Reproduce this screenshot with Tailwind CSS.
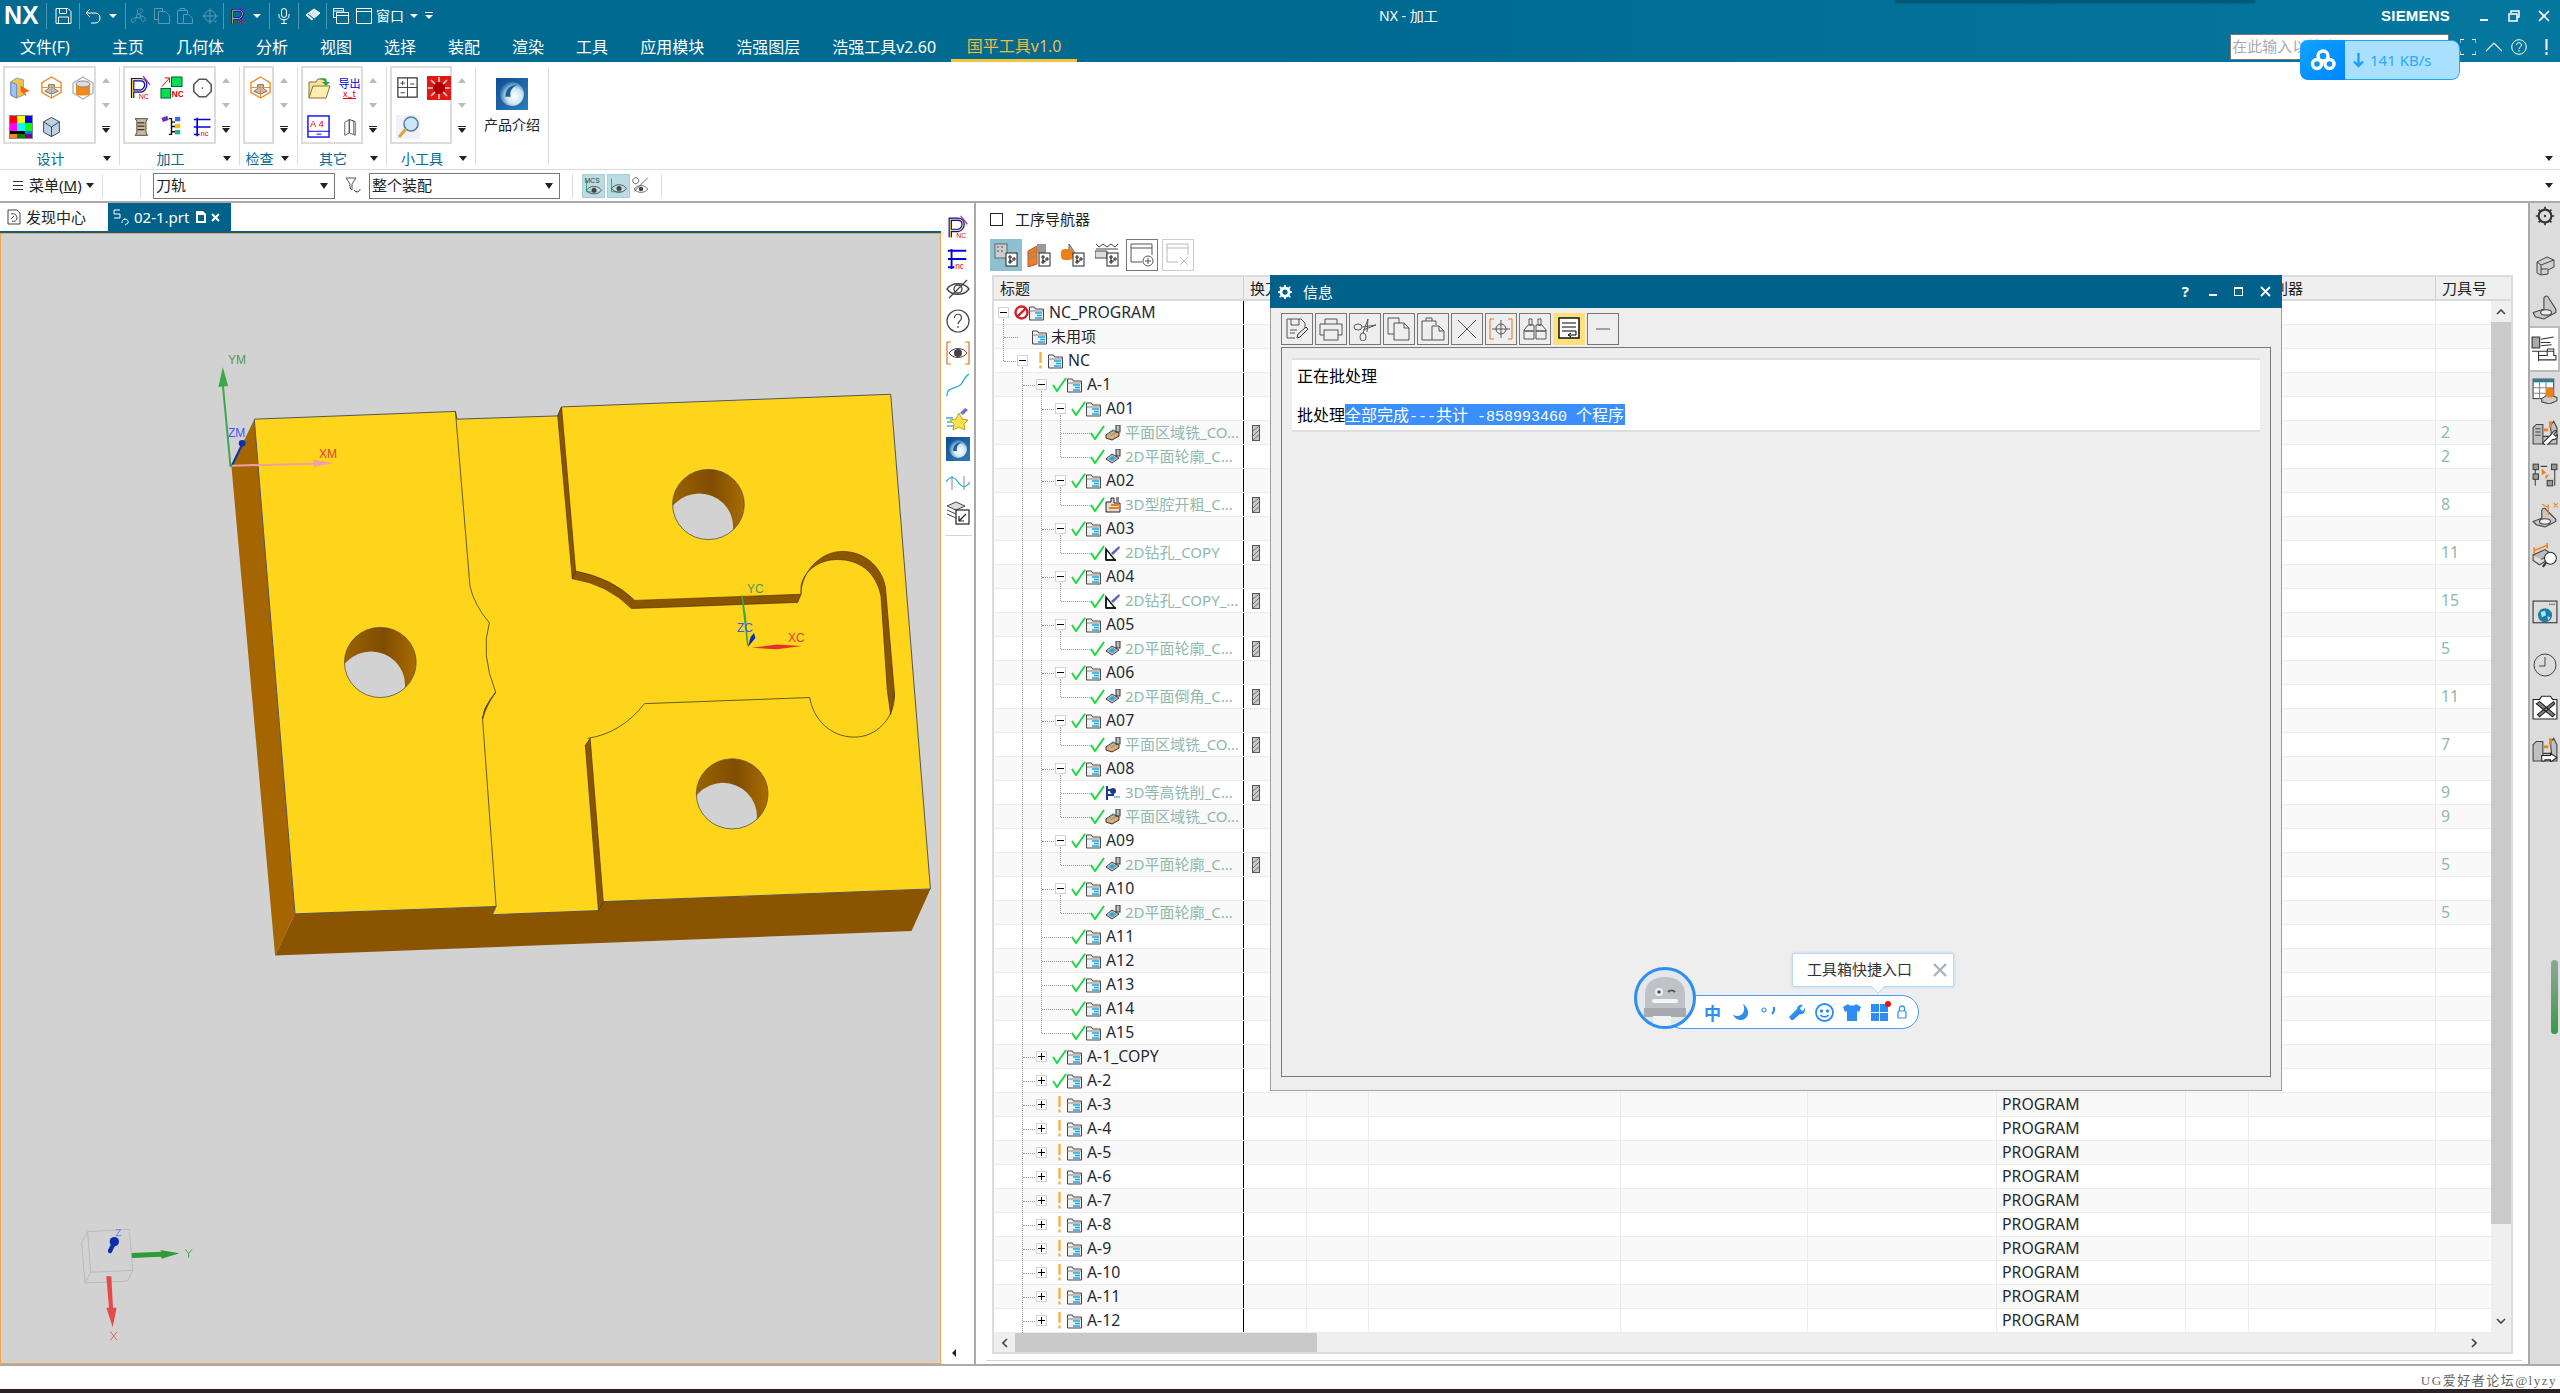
<!DOCTYPE html>
<html lang="zh">
<head>
<meta charset="utf-8">
<title>NX - 加工</title>
<script src="https://cdn.jsdelivr.net/npm/@tailwindcss/browser@4"></script>
</head>
<body class="m-0 bg-white">
<svg class="absolute w-0 h-0" aria-hidden="true">
<defs>
<linearGradient id="gBubble" x1="0" y1="0" x2="1" y2="1"><stop offset="0" stop-color="#0f4c92"/><stop offset="1" stop-color="#2b7fb8"/></linearGradient>
<radialGradient id="gSphere" cx=".6" cy=".6" r=".6"><stop offset="0" stop-color="#ffffff"/><stop offset=".55" stop-color="#cfe4f2"/><stop offset="1" stop-color="#2f74ad"/></radialGradient>
<linearGradient id="gHole" x1="0" y1="0" x2="1" y2="0"><stop offset="0" stop-color="#9c6200"/><stop offset=".55" stop-color="#7f4d00"/><stop offset="1" stop-color="#ab6c00"/></linearGradient>
<clipPath id="holeClip"><ellipse cx="1049" cy="425" rx="74" ry="86"/></clipPath>
<symbol id="pnc" viewBox="0 0 24 28"><path d="M3 26V5h9c5 0 6 4 6 6s-2 7-6 7H3" fill="none" stroke="#0000f0" stroke-width="4"/><path d="M3 26V5h9c5 0 6 4 6 6s-2 7-6 7H3" fill="none" stroke="#ffe600" stroke-width="1.3"/><path d="M15 1l8 10" stroke="#a020c0" stroke-width="1.4"/><text x="10" y="27" font-size="8" fill="#e00000" font-family="Liberation Sans">NC</text></symbol>
<symbol id="tnc" viewBox="0 0 24 24"><path d="M5 1v22M1 3h3M1 12h3M1 21h3M5 3h16M5 12h16M5 21h3" stroke="#0000e0" stroke-width="2" fill="none"/><text x="9" y="23" font-size="9" fill="#e00000" font-family="Liberation Sans">nc</text></symbol>
<symbol id="hexo" viewBox="0 0 24 24"><path d="M12 1l10 6v10l-10 6-10-6V7z" fill="none" stroke="#f08a24" stroke-width="1.4"/><path d="M9 9h6v4l4 3-7 3-7-3 4-3z" fill="#bdbdbd" stroke="#555" stroke-width=".8"/><path d="M2 12h20M12 13v10" stroke="#f08a24"/></symbol>
<symbol id="hexc" viewBox="0 0 24 24"><path d="M12 1l10 6v10l-10 6-10-6V7z" fill="none" stroke="#aaa" stroke-width="1.2"/><path d="M5 8h14v10c0 2-14 2-14 0z" fill="#ee8a1a"/><ellipse cx="12" cy="8" rx="7" ry="3" fill="#ddd" stroke="#888"/></symbol>
<symbol id="boxa" viewBox="0 0 24 24"><path d="M2 6l6-4 7 2v16l-7 3-6-3z" fill="#f4c24c" stroke="#7aa0d0"/><path d="M2 6l6 3v14l-6-3z" fill="#9fc4ee" stroke="#5b8bc8"/><path d="M12 10l10 6-5 1 1 4-6-5z" fill="#ee6a10"/></symbol>
<symbol id="colors" viewBox="0 0 24 24"><rect width="24" height="24" fill="#888"/><rect x="1" y="1" width="7" height="7" fill="#ff0000"/><rect x="8" y="1" width="8" height="7" fill="#ffff00"/><rect x="16" y="1" width="7" height="7" fill="#0000ff"/><rect x="1" y="8" width="7" height="8" fill="#ff00ff"/><rect x="8" y="8" width="8" height="8" fill="#00ffff"/><rect x="16" y="8" width="7" height="8" fill="#00ff00"/><rect x="1" y="16" width="7" height="3" fill="#000"/><rect x="8" y="16" width="8" height="3" fill="#000"/><rect x="16" y="16" width="7" height="3" fill="#0080ff"/><rect x="1" y="19" width="7" height="4" fill="#ff7f27"/><rect x="8" y="19" width="8" height="4" fill="#008000"/><rect x="16" y="19" width="7" height="4" fill="#800080"/></symbol>
<symbol id="cubeb" viewBox="0 0 24 24"><path d="M12 1l9 5v12l-9 5-9-5V6z" fill="#b8d3e6" stroke="#333"/><path d="M12 12l9-6M12 12L3 6M12 12v11" stroke="#333" fill="none"/></symbol>
<symbol id="nc2" viewBox="0 0 24 24"><rect x="1" y="13" width="10" height="10" fill="#00e050" stroke="#006030"/><rect x="12" y="1" width="11" height="10" fill="#00e050" stroke="#006030"/><path d="M2 11L10 2M5 2h5v5" stroke="#e00000" fill="none"/><text x="12" y="22" font-size="9" font-weight="700" fill="#e00000" font-family="Liberation Sans">NC</text></symbol>
<symbol id="ring" viewBox="0 0 24 24"><path d="M8 2h8l6 6v8l-6 6H8l-6-6V8z" fill="none" stroke="#555" stroke-width="1.8" stroke-linejoin="round"/><circle cx="12" cy="12" r="1" fill="#555"/></symbol>
<symbol id="scroll" viewBox="0 0 24 24"><path d="M5 2h15l-2 3v14l2 3H5l2-3V5z" fill="#cbb896" stroke="#333"/><path d="M8 7h8M8 11h8M8 15h8" stroke="#333" stroke-width="1.5"/></symbol>
<symbol id="tree2" viewBox="0 0 24 24"><path d="M9 3h3v18H9M12 7h4M12 12h4M12 18h4" stroke="#111" stroke-width="1.6" fill="none"/><rect x="1" y="1" width="7" height="5" fill="#7030c0" transform="rotate(-20 4 3)"/><rect x="16" y="1" width="6" height="5" fill="#3070e0"/><rect x="16" y="9" width="6" height="5" fill="#f0c020"/><rect x="16" y="16" width="6" height="5" fill="#20b0a0"/></symbol>
<symbol id="fold" viewBox="0 0 24 24"><path d="M2 22V6h7l2-3h8v6" fill="#fbe39a" stroke="#8a7030"/><path d="M2 22l4-12h17l-4 12z" fill="#fff0b0" stroke="#8a7030"/><path d="M12 3c5-2 7 0 8 3h3l-4 4-4-4h3c-1-2-3-3-6-3z" fill="#22aa44"/></symbol>
<symbol id="a4" viewBox="0 0 24 24"><rect x="1" y="1" width="22" height="22" fill="#fff" stroke="#0000f0" stroke-width="1.4"/><text x="3" y="12" font-size="10" fill="#e00000" font-family="Liberation Sans">A 4</text><path d="M1 17h22M10 20h5" stroke="#0000f0"/></symbol>
<symbol id="books" viewBox="0 0 24 24"><path d="M5 6l6-4v18l-6 3zM11 2l6 2v18l-6-2z" fill="#fff" stroke="#333"/><path d="M14 3l5 2v18l-2-1" fill="none" stroke="#333"/></symbol>
<symbol id="calc" viewBox="0 0 24 24"><rect x="1" y="1" width="22" height="22" fill="#fff" stroke="#333" stroke-width="1.4"/><path d="M12 1v22M1 12h22M4 7h5M6.500 4.500v5M4 18h5M15 8h5M15 12h5" stroke="#333"/></symbol>
<symbol id="redg" viewBox="0 0 24 24"><rect width="24" height="24" fill="#e01818"/><circle cx="12" cy="12" r="6" fill="#a00"/><g stroke="#ffd0d0" stroke-width="1.600"><path d="M12 1v5M12 18v5M1 12h5M18 12h5M4 4l4 4M16 16l4 4M20 4l-4 4M8 16l-4 4"/></g></symbol>
<symbol id="mag" viewBox="0 0 24 24"><rect width="24" height="24" fill="#f1f1f7"/><circle cx="15" cy="9" r="7" fill="#cde6f7" stroke="#4d7fa8" stroke-width="1.500"/><path d="M10 14L3 22" stroke="#e0a040" stroke-width="3"/></symbol>
<symbol id="bubble" viewBox="0 0 24 24"><rect width="24" height="24" fill="url(#gBubble)"/><circle cx="12" cy="12" r="9" fill="url(#gSphere)"/><path d="M7 14c0-6 4-9 9-9-4 2-6 5-5 9z" fill="#1d5d9a"/></symbol>
<symbol id="eyeoff" viewBox="0 0 24 24" fill="none" stroke="#444" stroke-width="1.3"><path d="M1 12c5-7 17-7 22 0-5 7-17 7-22 0z"/><circle cx="12" cy="12" r="4"/><path d="M3 21L21 3"/></symbol>
<symbol id="help" viewBox="0 0 24 24" fill="none" stroke="#444" stroke-width="1.200"><circle cx="12" cy="12" r="11"/><path d="M8.500 9c0-5 7-5 7 0 0 3-3.500 3-3.500 6M12 17v2"/></symbol>
<symbol id="eyeb" viewBox="0 0 24 24" fill="none"><path d="M5 1H1v22h4M19 1h4v22h-4" stroke="#e0761b" stroke-width="1.200"/><path d="M3 12c4-6 14-6 18 0-4 6-14 6-18 0z" stroke="#444"/><circle cx="12" cy="12" r="4" fill="#444"/></symbol>
<symbol id="curve" viewBox="0 0 24 24"><path d="M1 23C1 12 12 17 16 10 18 6 20 3 23 1" fill="none" stroke="#19a8d8" stroke-width="1.300"/></symbol>
<symbol id="star" viewBox="0 0 24 24"><path d="M13 6l3 6 6 1-4 4 1 6-6-3-6 3 1-6-4-4 6-1z" fill="#ffe14d" stroke="#c8a020"/><path d="M14 6l5-5 3 2-5 5z" fill="#7b70c0"/><path d="M0 11h7M1 15h5M1 19h7" stroke="#4aa8e0" stroke-width="1.500"/></symbol>
<symbol id="wave" viewBox="0 0 24 24"><path d="M0 12c4-6 8-6 12 0s8 6 12 0" fill="none" stroke="#19a8d8" stroke-width="1.200"/><path d="M6 6v14M18 6v14" stroke="#888"/></symbol>
<symbol id="layers" viewBox="0 0 24 24"><path d="M1 5l9-4 9 4-9 4z" fill="#ddd" stroke="#444"/><path d="M1 9l9 4 5-2M1 13l9 4" fill="none" stroke="#444"/><rect x="10" y="9" width="13" height="14" fill="#fff" stroke="#222" stroke-width="1.200"/><path d="M13 20l7-7M13 15v5h5" fill="none" stroke="#222" stroke-width="1.200"/></symbol>
<symbol id="folder" viewBox="0 0 15 16"><path d="M.5 15V2h5l1 2h8v11z" fill="#f0f0f0" stroke="#444"/><path d="M.5 6h14" stroke="#888"/><path d="M6 8h7M8 10.500h5M6 13h7" stroke="#18a8dc" stroke-width="1.600"/></symbol>
<symbol id="ok" viewBox="0 0 15 15"><path d="M1 8l4 6L14 1" fill="none" stroke="#22d84a" stroke-width="2"/></symbol>
<symbol id="warn" viewBox="0 0 15 17"><path d="M7.500 0v11M7.500 13.500v3" stroke="#fbb040" stroke-width="2.400"/></symbol>
<symbol id="stop" viewBox="0 0 15 15"><circle cx="7.500" cy="7.500" r="6" fill="none" stroke="#d21f27" stroke-width="2.400"/><path d="M3 12L12 3" stroke="#d21f27" stroke-width="2.400"/></symbol>
<symbol id="holder" viewBox="0 0 8 16"><rect x=".5" y=".5" width="7" height="15" fill="#c9c9c9" stroke="#555"/><path d="M1 6l6-5M1 11l6-6M1 15l6-5" stroke="#777"/></symbol>
<symbol id="opmill" viewBox="0 0 16 16"><path d="M1 10l7-5 6 3v3l-7 4-6-2z" fill="#f0a868" stroke="#333"/><path d="M3 9l7-4M5 11l7-4" stroke="#36a8d8"/><rect x="11" y="0" width="4" height="7" fill="#bbb" stroke="#333"/></symbol>
<symbol id="opprof" viewBox="0 0 16 16"><path d="M1 10l6-5 7 4-7 5z" fill="#bbb" stroke="#444"/><path d="M4 10l3-3 4 2-4 3z" fill="#2aa8dc"/><rect x="11" y="0" width="4" height="7" fill="#bbb" stroke="#333"/></symbol>
<symbol id="opcav" viewBox="0 0 16 16"><path d="M1 5h5V1h3v5h6v9H1z" fill="#ddd" stroke="#222"/><path d="M6 7h9v2H6zM4 10h11v2H4z" fill="#ef8019"/><rect x="11" y="0" width="3" height="6" fill="#888"/></symbol>
<symbol id="opdrill" viewBox="0 0 16 16"><path d="M1 15V4l9 11z" fill="#fff" stroke="#111" stroke-width="1.400"/><path d="M1 15V4M1 15h10" stroke="#111" stroke-width="1.400"/><path d="M6 8l8-7 1 2-7 7z" fill="#5a60c8"/></symbol>
<symbol id="opcont" viewBox="0 0 16 16"><path d="M2 1v14M2 5h5M2 10h7" stroke="#1b3a8a" stroke-width="2"/><circle cx="8" cy="6" r="3" fill="#1b3a8a"/><path d="M9 12h6" stroke="#38a"/></symbol>
<symbol id="navdoc" viewBox="0 0 24 24"><rect x="12" y="10" width="11" height="13" fill="#fff" stroke="#222"/><path d="M15 13h2v2h-2zM15 18h2v2h-2zM19 15h2v2h-2zM16 15v3h3" fill="none" stroke="#222"/></symbol>
<symbol id="d-save" viewBox="0 0 24 24" fill="none" stroke="#555" stroke-width="1"><path d="M2 2h14l4 4v6M2 2v19h8"/><path d="M6 2v6h8V2M5 13h7M5 16h5"/><path d="M12 21l1-4 8-7 2 2-8 8z" fill="#eee" stroke="#333"/></symbol>
<symbol id="d-print" viewBox="0 0 24 24" fill="none" stroke="#555" stroke-width="1"><path d="M6 7V2h12v5M5 18H1V7h22v11h-4"/><rect x="5" y="13" width="14" height="10"/></symbol>
<symbol id="d-cut" viewBox="0 0 24 24" fill="none" stroke="#555" stroke-width="1"><ellipse cx="5" cy="10" rx="4" ry="3"/><ellipse cx="10" cy="20" rx="3" ry="4"/><path d="M9 10l14-2-13 5M10 16l5-14-1 13"/></symbol>
<symbol id="d-copy" viewBox="0 0 24 24" fill="none" stroke="#555" stroke-width="1"><path d="M1 1h11v5M1 1v16h6"/><path d="M7 6h10l5 5v12H7z" fill="#eee"/><path d="M17 6v5h5"/></symbol>
<symbol id="d-paste" viewBox="0 0 24 24" fill="none" stroke="#555" stroke-width="1"><path d="M1 4h14v4M1 4v19h10M5 4V1h6v3"/><path d="M11 9h7l5 5v9H11z" fill="#eee"/><path d="M18 9v5h5"/></symbol>
<symbol id="d-x" viewBox="0 0 24 24"><path d="M3 3l18 18M21 3L3 21" stroke="#555"/></symbol>
<symbol id="d-tgt" viewBox="0 0 24 24" fill="none"><path d="M5 2H1v20h4M19 2h4v20h-4" stroke="#e0761b"/><circle cx="12" cy="12" r="5" stroke="#555"/><path d="M12 3v18M3 12h18" stroke="#555"/></symbol>
<symbol id="d-bino" viewBox="0 0 24 24" fill="none" stroke="#555" stroke-width="1"><path d="M6 2h3v6H6zM15 2h3v6h-3zM5 8h6v6H1v-1zM13 8h6l4 5v1H13zM1 14h10v8H1zM13 14h10v8H13z"/></symbol>
<symbol id="d-wrap" viewBox="0 0 24 24" fill="none"><rect x="2" y="1" width="20" height="20" fill="#fff" stroke="#000" stroke-width="1.400"/><path d="M5 6h14M5 10h14M5 14h14v4h-7M14 16l-3 2 3 2" stroke="#000"/></symbol>
<symbol id="d-min" viewBox="0 0 24 24"><path d="M5 12h14" stroke="#555"/></symbol>
<symbol id="w-plus" viewBox="0 0 24 24" fill="none" stroke="#555" stroke-width="1"><path d="M12 19H1V1h21v11M1 5h21"/><circle cx="18" cy="18" r="5"/><path d="M15 18h6M18 15v6"/></symbol>
<symbol id="w-x" viewBox="0 0 24 24" fill="none" stroke="#bbb" stroke-width="1"><path d="M12 19H1V1h21v11M1 5h21M14 14l8 8M22 14l-8 8"/></symbol>
<symbol id="r-gear" viewBox="0 0 24 24"><circle cx="12" cy="12" r="7" fill="none" stroke="#333" stroke-width="2.400"/><circle cx="12" cy="12" r="1.300" fill="#333"/><path d="M12 2v3M12 19v3M2 12h3M19 12h3M5 5l2 2M17 17l2 2M19 5l-2 2M7 17l-2 2" stroke="#333" stroke-width="1.800"/></symbol>
<symbol id="r-block" viewBox="0 0 24 24"><path d="M4 10l10-5 7 3v7l-6 3v4l-7 1-4-2z" fill="#d0d0d0" stroke="#444"/><path d="M4 10l4 3v10M8 13l13-5M8 17h7" stroke="#444" fill="none"/></symbol>
<symbol id="r-part" viewBox="0 0 24 24"><path d="M1 17l10-3V4c0-2 3-3 4-1l7 11v3l-11 6-8-2z" fill="#c8c8c8" stroke="#444"/><ellipse cx="13" cy="17" rx="5" ry="2.500" fill="#eee" stroke="#444"/></symbol>
<symbol id="r-step" viewBox="0 0 24 24" fill="none" stroke="#333"><rect x="1" y="1" width="7" height="10" fill="#aaa"/><path d="M9 3l12-2M9 6h9M9 9l10-1M1 14h20M7 14v9M7 18h8v-6M15 12h6v6h2v4H7"/></symbol>
<symbol id="r-table" viewBox="0 0 24 24"><rect x="1" y="1" width="19" height="18" fill="#fff" stroke="#444"/><rect x="1" y="1" width="19" height="3" fill="#2a7f9f"/><path d="M1 9h19M1 14h19M7 4v15M13 4v15" stroke="#888"/><path d="M9 19l6-4 8 3v3l-7 3-7-2z" fill="#ccc" stroke="#444"/><rect x="13" y="9" width="7" height="9" rx="2" fill="#ef8019"/></symbol>
<symbol id="r-mach" viewBox="0 0 24 24"><path d="M1 8l3-3h6v18H1zM10 16h8l-1-10 3-4 3 6v15H10z" fill="#c0c0c0" stroke="#444"/><path d="M3 9h5M3 12h5M3 15h5" stroke="#444"/><path d="M11 10h4M17 2v6" stroke="#ef8019" stroke-width="2.500"/><path d="M10 22l8-8c1-3 4-4 5-3l-3 3 2 2 2-2c0 3-2 5-5 5l-6 6z" fill="#fff" stroke="#333"/></symbol>
<symbol id="r-flow" viewBox="0 0 24 24" fill="none" stroke="#444"><rect x="1" y="2" width="5" height="5" fill="#999"/><rect x="1" y="11" width="5" height="5" fill="#999"/><rect x="18" y="2" width="5" height="5" fill="#999"/><rect x="14" y="17" width="5" height="5" fill="#999"/><path d="M3 7v4M3 16v6M21 7v15M8 4h6"/><path d="M9 6l4 4-4 2zM16 11l-3 5-1-3z" fill="#ef8019" stroke="none"/></symbol>
<symbol id="r-partx" viewBox="0 0 24 24"><path d="M1 18l8-3V8c0-2 3-3 4-1l9 9v2l-10 5-8-2z" fill="#c8c8c8" stroke="#444"/><ellipse cx="12" cy="18" rx="5" ry="2.500" fill="#eee" stroke="#444"/><path d="M9 2l6 3M15 2v10M20 1l4 4M24 1l-4 4" stroke="#ef8019"/></symbol>
<symbol id="r-book" viewBox="0 0 24 24"><path d="M1 12l11-5 6 4-11 6z" fill="#bbb" stroke="#444"/><path d="M1 12v5l6 4 5-3" fill="#ddd" stroke="#444"/><circle cx="17" cy="15" r="5.500" fill="#fff" stroke="#333"/><path d="M2 8l12-5M2 5v6M14 1v5" stroke="#ef8019" stroke-width="1.400"/><path d="M13 19l-3 4" stroke="#333" stroke-width="2"/></symbol>
<symbol id="r-web" viewBox="0 0 24 24"><rect x="1" y="1" width="22" height="20" fill="#ddd" stroke="#333"/><path d="M16 4h5" stroke="#333" stroke-dasharray="1 1"/><circle cx="12" cy="14" r="6.500" fill="#1b7fa8"/><path d="M8 11l4-1 1 4-4 2zM14 15l3 1-2 3z" fill="#b6e0ef"/></symbol>
<symbol id="r-clock" viewBox="0 0 24 24" fill="none" stroke="#444"><circle cx="12" cy="12" r="11"/><path d="M12 4v9H6"/></symbol>
<symbol id="r-tools" viewBox="0 0 24 24"><path d="M1 5h6l2-3h8l2 3h4v18H1z" fill="#fff" stroke="#222"/><path d="M4 9l15 12 2-2L7 7zM20 7l-15 12 2 2L21 9z" fill="#888" stroke="#222"/></symbol>
<symbol id="r-macha" viewBox="0 0 24 24"><path d="M1 8l3-3h6v18H1zM10 16h8l-1-10 3-4 3 6v15H10z" fill="#c0c0c0" stroke="#444"/><path d="M11 10h4M17 2v6" stroke="#ef8019" stroke-width="2.500"/><path d="M9 23v-5h8v-2l6 4-6 4v-2h-5v1z" fill="#fff" stroke="#222"/></symbol>
<symbol id="q-save" viewBox="0 0 16 16" fill="none" stroke="#fff"><path d="M.5.500h12l3 3v12H.500zM4 .5v5h7v-5M3 15V9h10v6"/></symbol>
<symbol id="q-undo" viewBox="0 0 16 16" fill="none" stroke="#fff"><path d="M5 1L1 5l4 4M1 5h9c3 0 5 2 5 5s-2 5-5 5H6"/></symbol>
<symbol id="q-fan" viewBox="0 0 16 16" fill="none" stroke="#5a9ab4"><circle cx="8" cy="8" r="2"/><path d="M8 6c-3-3 0-6 3-5s0 4-3 5zM10 8c4 0 6 3 4 5s-4-2-4-5zM6 9c-3 2-6 1-5 4s4 1 5-4z"/></symbol>
<symbol id="q-copy" viewBox="0 0 16 16" fill="none" stroke="#5a9ab4"><path d="M.5.500h8v3M.5.500v11h4M4.500 3.500h7l4 4v8h-11z"/></symbol>
<symbol id="q-paste" viewBox="0 0 16 16" fill="none" stroke="#5a9ab4"><path d="M.5 2.500h10v3M.5 2.500v13h6M3 2.500V.5h5v2M6.500 6.500h5l4 4v5h-9z"/></symbol>
<symbol id="q-tgt" viewBox="0 0 16 16" fill="none" stroke="#5a9ab4"><circle cx="8" cy="8" r="5.500"/><path d="M8 0v16M0 8h16M12 14l3-1"/></symbol>
<symbol id="q-mic" viewBox="0 0 12 16" fill="none" stroke="#fff"><rect x="3.500" y=".5" width="5" height="9" rx="2.500"/><path d="M1 6v2c0 5 10 5 10 0V6M6 12v3M3 15.500h6"/></symbol>
<symbol id="q-era" viewBox="0 0 16 16"><path d="M1 7l8-6 6 4-8 7z" fill="#d8e8ee" stroke="#fff"/><path d="M3 6l6 5" stroke="#046"/></symbol>
<symbol id="q-win2" viewBox="0 0 16 16" fill="none" stroke="#fff"><path d="M.5.500h10v3M.5.500v9h3M.5 3h10"/><path d="M3.500 4.500h12v11h-12zM3.500 7.500h12" fill="#046b92"/></symbol>
<symbol id="q-win" viewBox="0 0 16 16" fill="none" stroke="#fff"><path d="M.5.500h15v15H.5zM.5 3.500h15"/></symbol>
</defs>
</svg>

<div id="app" class="relative w-[2560px] h-[1394px] overflow-hidden flex flex-col bg-white text-[#222] [font-family:'Noto_Sans','Noto_Sans_CJK_SC',sans-serif]">

  <!-- top bar -->
  <header class="h-[62px] shrink-0 flex flex-col text-white bg-gradient-to-r from-[#006a91] via-[#006a91] to-[#05779f]">
    <div class="h-[31px] flex items-center">
      <span class="ml-[4px] w-[40px] text-[25px] leading-none font-bold [font-family:'Liberation_Sans',sans-serif]">NX</span>
      <span class="ml-[2px] w-px h-[26px] bg-white/30"></span>
      <svg class="ml-[8px] w-[17px] h-[16px]"><use href="#q-save"/></svg>
      <span class="ml-[7px] w-px h-[26px] bg-white/30"></span>
      <svg class="ml-[5px] w-[16px] h-[16px]"><use href="#q-undo"/></svg>
      <span class="ml-[8px] w-0 h-0 border-x-[4px] border-x-transparent border-t-[4px] border-t-white"></span>
      <span class="ml-[8px] w-px h-[26px] bg-white/30"></span>
      <svg class="ml-[4px] w-[17px] h-[16px]"><use href="#q-fan"/></svg>
      <svg class="ml-[7px] w-[16px] h-[16px]"><use href="#q-copy"/></svg>
      <svg class="ml-[7px] w-[16px] h-[16px]"><use href="#q-paste"/></svg>
      <svg class="ml-[9px] w-[16px] h-[16px]"><use href="#q-tgt"/></svg>
      <span class="ml-[5px] w-px h-[26px] bg-white/30"></span>
      <svg class="ml-[6px] w-[17px] h-[18px]"><use href="#pnc"/></svg>
      <span class="ml-[6px] w-0 h-0 border-x-[4px] border-x-transparent border-t-[4px] border-t-white"></span>
      <span class="ml-[8px] w-px h-[26px] bg-white/30"></span>
      <svg class="ml-[8px] w-[12px] h-[18px]"><use href="#q-mic"/></svg>
      <span class="ml-[8px] w-px h-[26px] bg-white/30"></span>
      <svg class="ml-[6px] w-[16px] h-[16px]"><use href="#q-era"/></svg>
      <span class="ml-[5px] w-px h-[26px] bg-white/30"></span>
      <svg class="ml-[6px] w-[16px] h-[16px]"><use href="#q-win2"/></svg>
      <svg class="ml-[7px] w-[16px] h-[16px]"><use href="#q-win"/></svg>
      <span class="ml-[4px] text-[14px] leading-none">窗口</span>
      <span class="ml-[6px] w-0 h-0 border-x-[4px] border-x-transparent border-t-[4px] border-t-white"></span>
      <span class="ml-[7px] flex flex-col items-center gap-[2px]"><span class="w-[8px] h-px bg-white"></span><span class="w-0 h-0 border-x-[4px] border-x-transparent border-t-[4px] border-t-white"></span></span>
      <span class="ml-[946px] text-[14px] leading-none whitespace-nowrap">NX - 加工</span>
      <span class="ml-auto text-[15px] leading-none font-bold tracking-[.2px] [font-family:'Liberation_Sans',sans-serif]">SIEMENS</span>
      <span class="ml-[30px] w-[8px] h-[2px] bg-white mt-[8px]"></span>
      <svg class="ml-[20px] w-[12px] h-[12px]" viewBox="0 0 12 12" fill="none" stroke="#fff" stroke-width="1.500"><path d="M3 3V1h8v6H9M1 4h8v7H1z"/></svg>
      <svg class="ml-[18px] mr-[10px] w-[12px] h-[12px]" viewBox="0 0 12 12" stroke="#fff" stroke-width="1.600"><path d="M1 1l10 10M11 1L1 11"/></svg>
    </div>
    <nav class="h-[31px] flex items-center text-[16px] leading-none">
      <span class="ml-[20px] w-[60px]">文件(F)</span>
      <span class="ml-[32px]">主页</span>
      <span class="ml-[32px]">几何体</span>
      <span class="ml-[32px]">分析</span>
      <span class="ml-[32px]">视图</span>
      <span class="ml-[32px]">选择</span>
      <span class="ml-[32px]">装配</span>
      <span class="ml-[32px]">渲染</span>
      <span class="ml-[32px]">工具</span>
      <span class="ml-[32px]">应用模块</span>
      <span class="ml-[32px]">浩强图层</span>
      <span class="ml-[32px] w-[104px] whitespace-nowrap">浩强工具v2.60</span>
      <span class="ml-[15px] h-[29px] mt-[2px] w-[126px] flex items-center justify-center text-[#f3bb3e] border-b-[3px] border-[#f6c33c] whitespace-nowrap">国平工具v1.0</span>
      <div class="ml-[1153px] w-[219px] h-[26px] bg-white border border-[#777] text-[#aaa] text-[15px] pl-[1px] flex items-center overflow-hidden whitespace-nowrap">在此输入以搜索</div>
      <svg class="ml-[11px] w-[16px] h-[16px]" viewBox="0 0 16 16" fill="none" stroke="#fff"><path d="M0 4V.5h4M12 .5h4V4M16 12v3.500h-4M4 15.500H0V12"/></svg>
      <svg class="ml-[10px] w-[16px] h-[10px]" viewBox="0 0 16 10" fill="none" stroke="#fff" stroke-width="1.200"><path d="M0 9l8-8 8 8"/></svg>
      <svg class="ml-[9px] w-[16px] h-[16px]" viewBox="0 0 16 16" fill="none" stroke="#fff"><circle cx="8" cy="8" r="7.300"/><path d="M5.500 6c0-3 5-3 5 0 0 2-2.500 2-2.500 4M8 11v1.500"/></svg>
      <svg class="ml-[18px] w-[3px] h-[16px]" viewBox="0 0 3 16"><path d="M1.500 0v11M1.500 13v3" stroke="#fff" stroke-width="2"/></svg>
    </nav>
  </header>

  <!-- ribbon -->
  <section class="h-[108px] shrink-0 relative flex items-start border-b border-[#d9d9d9] text-[14px] leading-none">
    <div class="mt-[5px] w-[120px] h-[98px] pl-[4px] border-r border-[#ddd] shrink-0">
      <div class="flex">
        <div class="w-[93px] h-[78px] border-2 border-[#dcdcdc] -m-px grid grid-cols-[31px_31px_31px] grid-rows-[39px_39px] place-items-center">
          <svg class="w-[23px] h-[23px]"><use href="#boxa"/></svg><svg class="w-[23px] h-[23px]"><use href="#hexo"/></svg><svg class="w-[24px] h-[24px]"><use href="#hexc"/></svg>
          <svg class="w-[24px] h-[24px]"><use href="#colors"/></svg><svg class="w-[21px] h-[24px]"><use href="#cubeb"/></svg>
        </div>
        <div class="w-[20px] h-[78px] flex flex-col items-center pl-[1px]">
          <span class="mt-[11px] w-0 h-0 border-x-[4px] border-x-transparent border-b-[5px] border-b-[#bbb]"></span>
          <span class="mt-[20px] w-0 h-0 border-x-[4px] border-x-transparent border-t-[5px] border-t-[#bbb]"></span>
          <span class="mt-[18px] w-[8px] h-px bg-[#222]"></span><span class="mt-[1px] w-0 h-0 border-x-[4px] border-x-transparent border-t-[5px] border-t-[#222]"></span>
        </div>
      </div>
      <div class="flex h-[15px] mt-[7px] text-[#036a92]"><span class="w-[93px] text-center">设计</span><span class="mt-[4px] ml-[6px] w-0 h-0 border-x-[4px] border-x-transparent border-t-[5px] border-t-[#222]"></span></div>
    </div>
    <div class="mt-[5px] w-[120px] h-[98px] pl-[4px] border-r border-[#ddd] shrink-0">
      <div class="flex">
        <div class="w-[93px] h-[78px] border-2 border-[#dcdcdc] -m-px grid grid-cols-[31px_31px_31px] grid-rows-[39px_39px] place-items-center">
          <svg class="w-[21px] h-[25px]"><use href="#pnc"/></svg><svg class="w-[23px] h-[23px]"><use href="#nc2"/></svg><svg class="w-[21px] h-[24px]"><use href="#ring"/></svg>
          <svg class="w-[20px] h-[22px]"><use href="#scroll"/></svg><svg class="w-[23px] h-[21px]"><use href="#tree2"/></svg><svg class="w-[20px] h-[22px]"><use href="#tnc"/></svg>
        </div>
        <div class="w-[20px] h-[78px] flex flex-col items-center pl-[1px]">
          <span class="mt-[11px] w-0 h-0 border-x-[4px] border-x-transparent border-b-[5px] border-b-[#bbb]"></span>
          <span class="mt-[20px] w-0 h-0 border-x-[4px] border-x-transparent border-t-[5px] border-t-[#bbb]"></span>
          <span class="mt-[18px] w-[8px] h-px bg-[#222]"></span><span class="mt-[1px] w-0 h-0 border-x-[4px] border-x-transparent border-t-[5px] border-t-[#222]"></span>
        </div>
      </div>
      <div class="flex h-[15px] mt-[7px] text-[#036a92]"><span class="w-[93px] text-center">加工</span><span class="mt-[4px] ml-[6px] w-0 h-0 border-x-[4px] border-x-transparent border-t-[5px] border-t-[#222]"></span></div>
    </div>
    <div class="mt-[5px] w-[58px] h-[98px] pl-[4px] border-r border-[#ddd] shrink-0">
      <div class="flex">
        <div class="w-[31px] h-[78px] border-2 border-[#dcdcdc] -m-px grid grid-cols-[31px] grid-rows-[39px_39px] place-items-center">
          <svg class="w-[23px] h-[23px]"><use href="#hexo"/></svg>
        </div>
        <div class="w-[20px] h-[78px] flex flex-col items-center pl-[1px]">
          <span class="mt-[11px] w-0 h-0 border-x-[4px] border-x-transparent border-b-[5px] border-b-[#bbb]"></span>
          <span class="mt-[20px] w-0 h-0 border-x-[4px] border-x-transparent border-t-[5px] border-t-[#bbb]"></span>
          <span class="mt-[18px] w-[8px] h-px bg-[#222]"></span><span class="mt-[1px] w-0 h-0 border-x-[4px] border-x-transparent border-t-[5px] border-t-[#222]"></span>
        </div>
      </div>
      <div class="flex h-[15px] mt-[7px] text-[#036a92]"><span class="w-[31px] text-center">检查</span><span class="mt-[4px] ml-[6px] w-0 h-0 border-x-[4px] border-x-transparent border-t-[5px] border-t-[#222]"></span></div>
    </div>
    <div class="mt-[5px] w-[89px] h-[98px] pl-[4px] border-r border-[#ddd] shrink-0">
      <div class="flex">
        <div class="w-[62px] h-[78px] border-2 border-[#dcdcdc] -m-px grid grid-cols-[31px_31px] grid-rows-[39px_39px] place-items-center">
          <svg class="w-[24px] h-[24px]"><use href="#fold"/></svg>
          <div class="flex flex-col items-center leading-none [font-family:'Noto_Sans_CJK_SC',sans-serif]"><span class="text-[11px] text-[#0000e0]">导出</span><span class="text-[9px] text-[#e00000] underline">x_t</span></div>
          <svg class="w-[23px] h-[23px]"><use href="#a4"/></svg><svg class="w-[18px] h-[24px]"><use href="#books"/></svg>
        </div>
        <div class="w-[20px] h-[78px] flex flex-col items-center pl-[1px]">
          <span class="mt-[11px] w-0 h-0 border-x-[4px] border-x-transparent border-b-[5px] border-b-[#bbb]"></span>
          <span class="mt-[20px] w-0 h-0 border-x-[4px] border-x-transparent border-t-[5px] border-t-[#bbb]"></span>
          <span class="mt-[18px] w-[8px] h-px bg-[#222]"></span><span class="mt-[1px] w-0 h-0 border-x-[4px] border-x-transparent border-t-[5px] border-t-[#222]"></span>
        </div>
      </div>
      <div class="flex h-[15px] mt-[7px] text-[#036a92]"><span class="w-[62px] text-center">其它</span><span class="mt-[4px] ml-[6px] w-0 h-0 border-x-[4px] border-x-transparent border-t-[5px] border-t-[#222]"></span></div>
    </div>
    <div class="mt-[5px] w-[89px] h-[98px] pl-[4px] border-r border-[#ddd] shrink-0">
      <div class="flex">
        <div class="w-[62px] h-[78px] border-2 border-[#dcdcdc] -m-px grid grid-cols-[31px_31px] grid-rows-[39px_39px] place-items-center">
          <svg class="w-[21px] h-[21px]"><use href="#calc"/></svg><svg class="w-[24px] h-[24px]"><use href="#redg"/></svg>
          <svg class="w-[24px] h-[24px]"><use href="#mag"/></svg>
        </div>
        <div class="w-[20px] h-[78px] flex flex-col items-center pl-[1px]">
          <span class="mt-[11px] w-0 h-0 border-x-[4px] border-x-transparent border-b-[5px] border-b-[#bbb]"></span>
          <span class="mt-[20px] w-0 h-0 border-x-[4px] border-x-transparent border-t-[5px] border-t-[#bbb]"></span>
          <span class="mt-[18px] w-[8px] h-px bg-[#222]"></span><span class="mt-[1px] w-0 h-0 border-x-[4px] border-x-transparent border-t-[5px] border-t-[#222]"></span>
        </div>
      </div>
      <div class="flex h-[15px] mt-[7px] text-[#036a92]"><span class="w-[62px] text-center">小工具</span><span class="mt-[4px] ml-[6px] w-0 h-0 border-x-[4px] border-x-transparent border-t-[5px] border-t-[#222]"></span></div>
    </div>
    <div class="mt-[5px] w-[73px] h-[98px] border-r border-[#ddd] shrink-0 flex flex-col items-center">
      <svg class="mt-[11px] w-[32px] h-[32px]"><use href="#bubble"/></svg>
      <span class="mt-[8px] whitespace-nowrap">产品介绍</span>
    </div>
    <span class="ml-auto mr-[7px] mt-[94px] w-0 h-0 border-x-[4px] border-x-transparent border-t-[5px] border-t-[#222]"></span>
  </section>

  <!-- selection bar -->
  <section class="h-[33px] shrink-0 flex items-center border-b-2 border-[#aaa] text-[15px] leading-none">
    <svg class="ml-[13px] w-[10px] h-[9px]" viewBox="0 0 10 9" stroke="#333"><path d="M0 .5h10M0 4.500h10M0 8.500h10"/></svg>
    <span class="ml-[6px] w-[54px] whitespace-nowrap">菜单(<span class="underline">M</span>)</span>
    <span class="ml-[3px] w-0 h-0 border-x-[4px] border-x-transparent border-t-[5px] border-t-[#222]"></span>
    <span class="ml-[8px] w-px h-[24px] bg-[#ddd]"></span>
    <span class="ml-[37px] w-px h-[24px] bg-[#ddd]"></span>
    <div class="ml-[12px] w-[182px] h-[26px] border border-[#777] flex items-center pl-[2px] pr-[6px]"><span>刀轨</span><span class="ml-auto w-0 h-0 border-x-[4.500px] border-x-transparent border-t-[6px] border-t-[#222]"></span></div>
    <svg class="ml-[10px] w-[16px] h-[17px]" viewBox="0 0 16 17" fill="none" stroke="#555"><path d="M1 1h10L7 7v6L5 11V7zM9 13l2 2 1-1M11 15c3 0 4-1 4-3"/></svg>
    <div class="ml-[8px] w-[191px] h-[26px] border border-[#777] flex items-center pl-[2px] pr-[6px]"><span>整个装配</span><span class="ml-auto w-0 h-0 border-x-[4.500px] border-x-transparent border-t-[6px] border-t-[#222]"></span></div>
    <span class="ml-[12px] w-px h-[24px] bg-[#ddd]"></span>
    <div class="ml-[9px] w-[23px] h-[24px] bg-[#bcdce4] border border-[#a9cdd6] flex items-center justify-center"><svg class="w-[20px] h-[20px]" viewBox="0 0 24 24" fill="none"><text x="1" y="8" font-size="8" fill="#333" font-family="Liberation Sans">MCS</text><path d="M3 5v14h12" stroke="#2a9a55"/><path d="M3 17c4-6 14-6 18 0-4 6-14 6-18 0z" stroke="#444"/><circle cx="12" cy="17" r="3" fill="#444"/></svg></div>
    <div class="ml-[2px] w-[23px] h-[24px] bg-[#bcdce4] border border-[#a9cdd6] flex items-center justify-center"><svg class="w-[20px] h-[20px]" viewBox="0 0 24 24" fill="none"><path d="M3 3v16h12" stroke="#2a9a55"/><path d="M3 15c4-6 14-6 18 0-4 6-14 6-18 0z" stroke="#444"/><circle cx="12" cy="15" r="3" fill="#444"/></svg></div>
    <svg class="ml-[2px] w-[18px] h-[20px]" viewBox="0 0 24 24" fill="none"><path d="M5 1c2 0 4 2 4 4s-2 4-4 4-4-2-4-4 2-4 4-4zM21 1L3 19" stroke="#333"/><path d="M3 16c4-6 14-6 18 0-4 6-14 6-18 0z" stroke="#444"/><circle cx="12" cy="16" r="3" fill="#444"/></svg>
    <span class="ml-[11px] w-px h-[24px] bg-[#ddd]"></span>
    <span class="ml-auto mr-[7px] w-0 h-0 border-x-[4px] border-x-transparent border-t-[5px] border-t-[#222]"></span>
  </section>

  <!-- main -->
  <main class="h-[1163px] shrink-0 flex border-b-2 border-[#aaa]">
    <!-- graphics -->
    <section class="w-[941px] shrink-0 flex flex-col">
      <div class="h-[28px] shrink-0 flex text-[15px] leading-none">
        <div class="w-[108px] flex items-center pl-[6px]">
          <svg class="w-[15px] h-[16px]" viewBox="0 0 15 16" fill="none" stroke="#444"><path d="M2 1h9l3 3v11H2zM5 5c3-1 6 1 6 4s-3 4-5 3M5 10l3-3"/></svg>
          <span class="ml-[5px] whitespace-nowrap">发现中心</span>
        </div>
        <div class="w-[123px] bg-[#00628a] text-white flex items-center pl-[5px]">
          <svg class="w-[17px] h-[17px]" viewBox="0 0 17 17" fill="none" stroke="#fff"><path d="M1 1h6M1 1v4h6v4H1M11 10c3 0 5 2 4 4l-3 2M9 14c0-2 1-4 3-4"/></svg>
          <span class="ml-[4px] whitespace-nowrap">02-1.prt</span>
          <svg class="ml-[7px] w-[10px] h-[12px]" viewBox="0 0 10 12" fill="#fff"><path d="M0 0h7l3 3v9H0zM2 4v6h6V4z"/></svg>
          <svg class="ml-[5px] w-[9px] h-[9px]" viewBox="0 0 9 9" stroke="#fff" stroke-width="2"><path d="M1 1l7 7M8 1L1 8"/></svg>
        </div>
      </div>
      <div class="h-[2px] shrink-0 bg-[#00628a]"></div>
      <div class="relative flex-1 bg-[#d2d2d2] border border-[#f2a456] border-t-[#f2a456] overflow-hidden">
        <svg class="absolute left-[199px] top-[97px] w-[760px] h-[640px]" viewBox="0 0 1568 1568" preserveAspectRatio="none">
          <polygon points="112,216 65,333 155,1530 196,1428" fill="#a56500"/>
          <polygon points="196,1428 155,1530 1468,1470 1507,1367 832,1398 822,1420 603,1430 611,1410" fill="#8b5400"/>
          <path d="M112,216 L527,197 L530,216 L738,208 L746,186 L1425,155 L1507,1367 L832,1398 L822,1420 L603,1430 L611,1410 L196,1428 Z" fill="#ffd51c" stroke="#555" stroke-width="1" vector-effect="non-scaling-stroke"/>
          <g fill="#8a5500" stroke="#3a2a00" stroke-width=".6">
            <path vector-effect="non-scaling-stroke" d="M746,186 L738,208 L768,607 L775,588 Z"/>
            <path vector-effect="non-scaling-stroke" d="M775,588 Q850,605 897,660 L1240,645 L1233,665 L890,680 Q840,620 768,607 Z"/>
            <path vector-effect="non-scaling-stroke" d="M1240,645 C1240,590 1280,540 1325,540 C1385,540 1415,600 1415,640 L1433,890 L1425,940 L1418,880 L1405,650 C1395,590 1360,560 1315,560 C1275,560 1245,590 1240,625 Z"/>
            <path vector-effect="non-scaling-stroke" d="M805,998 L795,1015 L822,1420 L832,1398 Z"/>
            <path vector-effect="non-scaling-stroke" d="M610,885 L588,925 L583,950 Q592,915 610,885 Z"/>
          </g>
          <g fill="none" stroke="#3c3c28" stroke-width=".8">
            <path vector-effect="non-scaling-stroke" d="M527,197 L557,625 Q565,670 597,715 Q578,790 610,885 Q585,920 583,950 L611,1410"/>
            <path vector-effect="non-scaling-stroke" d="M800,998 Q870,985 917,913 L1258,898 C1265,950 1300,995 1350,995 C1395,995 1433,950 1433,890"/>
          </g>
          <g>
            <g clip-path="url(#holeClip)"><ellipse cx="1049" cy="425" rx="74" ry="86" fill="url(#gHole)"/><ellipse cx="1030" cy="480" rx="70" ry="82" fill="#d2d2d2"/></g>
            <ellipse cx="1049" cy="425" rx="74" ry="86" fill="none" stroke="#444" stroke-width=".7" vector-effect="non-scaling-stroke"/>
          </g>
          <g transform="translate(-677 387)">
            <g clip-path="url(#holeClip)"><ellipse cx="1049" cy="425" rx="74" ry="86" fill="url(#gHole)"/><ellipse cx="1030" cy="480" rx="70" ry="82" fill="#d2d2d2"/></g>
            <ellipse cx="1049" cy="425" rx="74" ry="86" fill="none" stroke="#444" stroke-width=".7" vector-effect="non-scaling-stroke"/>
          </g>
          <g transform="translate(49 709)">
            <g clip-path="url(#holeClip)"><ellipse cx="1049" cy="425" rx="74" ry="86" fill="url(#gHole)"/><ellipse cx="1030" cy="480" rx="70" ry="82" fill="#d2d2d2"/></g>
            <ellipse cx="1049" cy="425" rx="74" ry="86" fill="none" stroke="#444" stroke-width=".7" vector-effect="non-scaling-stroke"/>
          </g>
          <path d="M47,130 L63,333" stroke="#3aa94a" stroke-width="2" vector-effect="non-scaling-stroke"/>
          <polygon points="47,88 38,137 58,135" fill="#3aa94a"/>
          <path d="M65,332 L88,275" stroke="#0a2fb0" stroke-width="2" vector-effect="non-scaling-stroke"/>
          <ellipse cx="87" cy="275" rx="7" ry="8" fill="#0a2fb0"/>
          <path d="M65,330 L235,325" stroke="#f0a0a0" stroke-width="2" vector-effect="non-scaling-stroke"/>
          <polygon points="275,324 234,315 234,333" fill="#f2a0a0"/>
          <polygon points="1118,648 1130,770 1125,700" fill="#3aa94a" stroke="#3aa94a" stroke-width="3"/>
          <polygon points="1130,775 1136,750 1143,740 1146,752" fill="#0a2fb0"/>
          <polygon points="1138,776 1190,768 1242,772 1190,780" fill="#e23030"/>
        </svg>
        <span class="absolute left-[227px] top-[120px] text-[#4a9a55] text-[12px] leading-none [font-family:'Liberation_Sans',sans-serif]">YM</span>
        <span class="absolute left-[227px] top-[193px] text-[#3a5aff] text-[12px] leading-none [font-family:'Liberation_Sans',sans-serif]">ZM</span>
        <span class="absolute left-[318px] top-[214px] text-[#e0403a] text-[12px] leading-none [font-family:'Liberation_Sans',sans-serif]">XM</span>
        <span class="absolute left-[746px] top-[349px] text-[#4a9a55] text-[12px] leading-none [font-family:'Liberation_Sans',sans-serif]">YC</span>
        <span class="absolute left-[736px] top-[388px] text-[#3a5aff] text-[12px] leading-none [font-family:'Liberation_Sans',sans-serif]">ZC</span>
        <span class="absolute left-[787px] top-[398px] text-[#e0403a] text-[12px] leading-none [font-family:'Liberation_Sans',sans-serif]">XC</span>
        <svg class="absolute left-[59px] top-[967px] w-[160px] h-[160px]" viewBox="0 0 480 480">
          <path d="M83,92 L208,85 L218,208 L92,214 Z M83,92 L65,125 L75,246 L92,214 M218,208 L202,240 L75,246" fill="none" stroke="#b5b5b5" stroke-width="2.500"/>
          <polygon points="215,156 305,152 300,147 358,157 305,173 303,167 216,171" fill="#2f9a36"/>
          <polygon points="139,226 154,226 159,320 170,320 158,378 139,320 147,320" fill="#e84848"/>
          <path d="M150,150 L165,120" stroke="#0a2fa8" stroke-width="13" stroke-linecap="round"/>
          <circle cx="163" cy="122" r="14" fill="#0a2fa8"/>
          <path d="M168,86h14l-14,18h16" fill="none" stroke="#4a7aff" stroke-width="2.500"/>
          <path d="M376,145l10,13 10-13M386,158v12" fill="none" stroke="#2f9a36" stroke-width="2.500"/>
          <path d="M151,392l20,26M171,392l-20,26" fill="none" stroke="#e05050" stroke-width="2.500"/>
        </svg>
      </div>
    </section>

    <!-- left icon strip -->
    <aside class="w-[35px] shrink-0 flex flex-col items-center pl-[1px] border-r-2 border-[#aaa]">
      <svg class="mt-[12px] w-[22px] h-[24px] shrink-0"><use href="#pnc"/></svg>
      <svg class="mt-[9px] w-[22px] h-[22px] shrink-0"><use href="#tnc"/></svg>
      <svg class="mt-[7px] w-[24px] h-[24px] shrink-0"><use href="#eyeoff"/></svg>
      <svg class="mt-[8px] w-[24px] h-[24px] shrink-0"><use href="#help"/></svg>
      <svg class="mt-[8px] w-[24px] h-[24px] shrink-0"><use href="#eyeb"/></svg>
      <svg class="mt-[8px] w-[24px] h-[24px] shrink-0"><use href="#curve"/></svg>
      <svg class="mt-[10px] w-[24px] h-[24px] shrink-0"><use href="#star"/></svg>
      <svg class="mt-[6px] w-[24px] h-[24px] shrink-0"><use href="#bubble"/></svg>
      <svg class="mt-[9px] w-[24px] h-[24px] shrink-0"><use href="#wave"/></svg>
      <svg class="mt-[7px] w-[24px] h-[24px] shrink-0"><use href="#layers"/></svg>
      <span class="mt-[10px] w-[27px] h-px bg-[#d5d5d5] shrink-0"></span>
      <span class="mt-auto mb-[7px] -ml-[9px] w-0 h-0 border-y-[4px] border-y-transparent border-r-[4px] border-r-[#222]"></span>
    </aside>

    <!-- navigator -->
    <section class="flex-1 min-w-0 pl-[16px] pr-[14px] flex flex-col text-[15px] leading-none">
      <div class="h-[36px] shrink-0 flex items-center -ml-[2px]">
        <span class="w-[13px] h-[13px] border-[1.500px] border-[#222] -mt-[4px]"></span>
        <span class="ml-[12px] -mt-[4px] whitespace-nowrap">工序导航器</span>
      </div>
      <div class="h-[32px] shrink-0 flex -ml-[2px]">
        <div class="w-[32px] h-[32px] bg-[#8dc0d0] relative flex items-center justify-center"><svg class="w-[24px] h-[24px]" viewBox="0 0 24 24"><rect x="1" y="1" width="12" height="14" fill="#ccc" stroke="#666"/><path d="M3 4h2M7 4h2M3 8h2M7 8h2" stroke="#555"/><use href="#navdoc"/></svg></div>
        <div class="w-[34px] h-[32px] flex items-center justify-center"><svg class="w-[24px] h-[24px]" viewBox="0 0 24 24"><path d="M1 8l9-5v18l-9 3z" fill="#ef8019" stroke="#a55"/><path d="M1 12l9-5M1 17l9-5" stroke="#888"/><rect x="10" y="1" width="9" height="9" fill="#999"/><use href="#navdoc"/></svg></div>
        <div class="w-[34px] h-[32px] flex items-center justify-center"><svg class="w-[24px] h-[24px]" viewBox="0 0 24 24"><path d="M8 1l8 12-8 0z" fill="#aaa" stroke="#666"/><rect x="0" y="6" width="12" height="11" rx="4" fill="#ef8019"/><use href="#navdoc"/></svg></div>
        <div class="w-[34px] h-[32px] flex items-center justify-center"><svg class="w-[24px] h-[24px]" viewBox="0 0 24 24" fill="none"><path d="M1 1l3 3 4-3 4 3 4-3 4 3 3-3M1 6h22" stroke="#444"/><path d="M0 8h12v7H0z" fill="#ddd" stroke="#444"/><use href="#navdoc"/></svg></div>
        <div class="ml-[2px] w-[32px] h-[32px] border-[1.500px] border-[#777] flex items-center justify-center"><svg class="w-[24px] h-[24px]"><use href="#w-plus"/></svg></div>
        <div class="ml-[4px] w-[32px] h-[32px] border-[1.500px] border-[#ccc] flex items-center justify-center"><svg class="w-[24px] h-[24px]"><use href="#w-x"/></svg></div>
      </div>
      <div class="h-[1079px] mt-[4px] shrink-0 w-[1521px] border-2 border-[#dcdcdc] flex flex-col">
        <div class="h-[24px] shrink-0 bg-[#efefef] border-b-2 border-[#d9d9d9] grid grid-cols-[249px_63px_62px_252px_187px_189px_189px_63px_187px_76px] items-center">
          <span class="pl-[6px]">标题</span>
          <span class="h-full border-l border-[#d0d0d0] pl-[6px] flex items-center whitespace-nowrap">换刀</span>
          <span class="h-full border-l border-[#d0d0d0]"></span>
          <span class="h-full border-l border-[#d0d0d0]"></span>
          <span class="h-full border-l border-[#d0d0d0]"></span>
          <span class="h-full border-l border-[#d0d0d0]"></span>
          <span class="h-full border-l border-[#d0d0d0]"></span>
          <span class="h-full border-l border-[#d0d0d0]"></span>
          <span class="h-full border-l border-[#d0d0d0] pl-[9px] flex items-center">切削器</span>
          <span class="h-full border-l border-[#d0d0d0] pl-[6px] flex items-center whitespace-nowrap">刀具号</span>
        </div>
        <div class="h-[1032px] shrink-0 flex">
          <div id="rows" class="relative w-[1497px] shrink-0"></div>
          <div class="w-[20px] shrink-0 flex flex-col bg-[#efefef]">
            <div class="h-[21px] shrink-0 flex items-center justify-center"><svg class="w-[10px] h-[6px]" viewBox="0 0 10 6" fill="none" stroke="#444" stroke-width="1.600"><path d="M1 5l4-4 4 4"/></svg></div>
            <div class="h-[902px] shrink-0 bg-[#cacaca]"></div>
            <div class="mt-auto h-[24px] flex items-center justify-center"><svg class="w-[10px] h-[6px]" viewBox="0 0 10 6" fill="none" stroke="#444" stroke-width="1.600"><path d="M1 1l4 4 4-4"/></svg></div>
          </div>
        </div>
        <div class="h-[19px] shrink-0 bg-[#efefef] flex items-center">
          <div class="w-[21px] flex justify-center"><svg class="w-[6px] h-[10px]" viewBox="0 0 6 10" fill="none" stroke="#444" stroke-width="1.600"><path d="M5 1L1 5l4 4"/></svg></div>
          <div class="w-[302px] h-full bg-[#c9c9c9]"></div>
          <div class="ml-[1154px] w-[6px]"><svg class="w-[6px] h-[10px]" viewBox="0 0 6 10" fill="none" stroke="#444" stroke-width="1.600"><path d="M1 1l4 4-4 4"/></svg></div>
        </div>
      </div>
      <div class="mt-[6px] -ml-[6px] -mr-[8px] h-px bg-[#d5d5d5]"></div>
    </section>

    <!-- right strip -->
    <aside class="w-[32px] shrink-0 bg-[#dcdcdc] border-l-2 border-[#aaa] relative flex flex-col items-center">
      <svg class="w-[22px] h-[22px] mt-[2px] shrink-0"><use href="#r-gear"/></svg>
      <svg class="w-[24px] h-[24px] mt-[25px] shrink-0"><use href="#r-block"/></svg>
      <svg class="w-[26px] h-[26px] mt-[18px] shrink-0"><use href="#r-part"/></svg>
      <div class="mt-[6px] h-[46px] w-[30px] self-start bg-white border-y-2 border-r-2 border-[#bbb] flex items-center justify-center shrink-0"><svg class="w-[26px] h-[26px]"><use href="#r-step"/></svg></div>
      <svg class="w-[26px] h-[26px] mt-[6px] shrink-0"><use href="#r-table"/></svg>
      <svg class="w-[26px] h-[26px] mt-[15px] shrink-0"><use href="#r-mach"/></svg>
      <svg class="w-[26px] h-[26px] mt-[17px] shrink-0"><use href="#r-flow"/></svg>
      <svg class="w-[26px] h-[26px] mt-[14px] shrink-0"><use href="#r-partx"/></svg>
      <svg class="w-[26px] h-[26px] mt-[14px] shrink-0"><use href="#r-book"/></svg>
      <svg class="w-[26px] h-[26px] mt-[32px] shrink-0"><use href="#r-web"/></svg>
      <svg class="w-[24px] h-[24px] mt-[27px] shrink-0"><use href="#r-clock"/></svg>
      <svg class="w-[26px] h-[26px] mt-[17px] shrink-0"><use href="#r-tools"/></svg>
      <svg class="w-[26px] h-[26px] mt-[16px] shrink-0"><use href="#r-macha"/></svg>
      <div class="mt-[198px] ml-[18px] w-[7px] h-[74px] rounded-full bg-gradient-to-b from-[#8fa594] to-[#2f9a4a] shrink-0"></div>
    </aside>
  </main>

  <footer class="h-[23px] shrink-0 flex items-center justify-end pr-[3px] pt-[5px] text-[#666] text-[13px] leading-none tracking-[1.500px] [font-family:'Liberation_Serif','Noto_Sans_CJK_SC',serif]">UG爱好者论坛@lyzy</footer>
  <div class="h-[4px] shrink-0 bg-[#2a2022]"></div>

  <!-- overlays: title shadow, netdisk badge, dialog -->
  <div class="absolute left-[1895px] top-0 w-[360px] h-[3px] bg-black/30 blur-[1px]"></div>

  <div class="absolute left-[2300px] top-[40px] w-[160px] h-[40px] rounded-[8px] overflow-hidden flex">
    <div class="w-[45px] bg-gradient-to-br from-[#12a4ff] to-[#0084ff] flex items-center justify-center">
      <svg class="w-[26px] h-[22px]" viewBox="0 0 26 22" fill="none" stroke="#fff" stroke-width="3.400"><circle cx="13" cy="7" r="5"/><circle cx="7" cy="15" r="4.500"/><circle cx="19.500" cy="15" r="4.500"/></svg>
    </div>
    <div class="flex-1 bg-[#a9dfff] border border-l-0 border-[#1aa7ff] rounded-r-[8px] flex items-center text-[#2ca8ff] text-[15px] [font-family:'Noto_Sans',sans-serif]">
      <svg class="ml-[8px] w-[11px] h-[15px]" viewBox="0 0 11 15" fill="none" stroke="#1aa0ff" stroke-width="2.400"><path d="M5.500 0v13M1 8.500l4.500 4.500L10 8.500"/></svg>
      <span class="ml-[6px] whitespace-nowrap">141 KB/s</span>
    </div>
  </div>

  <div class="absolute left-[1270px] top-[275px] w-[1012px] h-[816px] bg-[#eeeeee] border border-t-0 border-[#a0a0a0] flex flex-col">
    <div class="h-[33px] shrink-0 bg-[#00628a] text-white flex items-center text-[15px] leading-none -mx-px">
      <svg class="ml-[8px] w-[14px] h-[14px]" viewBox="0 0 24 24"><circle cx="12" cy="12" r="7" fill="none" stroke="#fff" stroke-width="5"/><path d="M12 0v5M12 19v5M0 12h5M19 12h5M3 3l4 4M17 17l4 4M21 3l-4 4M7 17l-4 4" stroke="#fff" stroke-width="3"/></svg>
      <span class="ml-[11px] mt-[2px]">信息</span>
      <span class="ml-auto text-[15px] font-bold">?</span>
      <span class="ml-[20px] w-[8px] h-[2px] bg-white mt-[7px]"></span>
      <span class="ml-[17px] w-[9px] h-[9px] border border-white border-t-2"></span>
      <svg class="ml-[17px] mr-[11px] w-[11px] h-[11px]" viewBox="0 0 11 11" stroke="#fff" stroke-width="1.800"><path d="M1 1l9 9M10 1l-9 9"/></svg>
    </div>
    <div class="h-[32px] mt-[5px] ml-[10px] shrink-0 flex gap-[2px]">
      <div class="w-[32px] h-[32px] border-[1.500px] border-[#777] flex items-center justify-center"><svg class="w-[24px] h-[24px]"><use href="#d-save"/></svg></div>
      <div class="w-[32px] h-[32px] border-[1.500px] border-[#777] flex items-center justify-center"><svg class="w-[24px] h-[24px]"><use href="#d-print"/></svg></div>
      <div class="w-[32px] h-[32px] border-[1.500px] border-[#777] flex items-center justify-center"><svg class="w-[24px] h-[24px]"><use href="#d-cut"/></svg></div>
      <div class="w-[32px] h-[32px] border-[1.500px] border-[#777] flex items-center justify-center"><svg class="w-[24px] h-[24px]"><use href="#d-copy"/></svg></div>
      <div class="w-[32px] h-[32px] border-[1.500px] border-[#777] flex items-center justify-center"><svg class="w-[24px] h-[24px]"><use href="#d-paste"/></svg></div>
      <div class="w-[32px] h-[32px] border-[1.500px] border-[#777] flex items-center justify-center"><svg class="w-[24px] h-[24px]"><use href="#d-x"/></svg></div>
      <div class="w-[32px] h-[32px] border-[1.500px] border-[#777] flex items-center justify-center"><svg class="w-[24px] h-[24px]"><use href="#d-tgt"/></svg></div>
      <div class="w-[32px] h-[32px] border-[1.500px] border-[#777] flex items-center justify-center"><svg class="w-[24px] h-[24px]"><use href="#d-bino"/></svg></div>
      <div class="w-[32px] h-[32px] bg-[#ffe07a] flex items-center justify-center"><svg class="w-[24px] h-[24px]"><use href="#d-wrap"/></svg></div>
      <div class="w-[32px] h-[32px] border-[1.500px] border-[#777] flex items-center justify-center"><svg class="w-[24px] h-[24px]"><use href="#d-min"/></svg></div>
    </div>
    <div class="ml-[10px] mt-[2px] w-[990px] h-[730px] shrink-0 border-[1.500px] border-[#777] pt-[10px] px-[10px]">
      <div class="h-[74px] bg-white border-y-2 border-[#dedede] pl-[5px] pt-[5px] text-[16px] leading-[21px] text-black [font-family:'Noto_Sans_CJK_SC',sans-serif]">
        <div>正在批处理</div>
        <div class="mt-[18px] flex h-[21px]"><span>批处理</span><span class="bg-[#3b8ffc] text-white whitespace-pre w-[280px] overflow-hidden">全部完成<span class="[font-family:'Liberation_Mono',monospace] text-[15px]">---</span>共计<span class="[font-family:'Liberation_Mono',monospace] text-[15px]"> -858993460 </span>个程序</span></div>
      </div>
    </div>
  </div>

  <!-- input-method widget -->
  <div class="absolute left-[1665px] top-[995px] w-[254px] h-[34px] rounded-full bg-white border border-[#4a9af5] flex items-center text-[#2c8df2]">
    <span class="ml-[38px] w-[18px] text-[17px] font-bold leading-none [font-family:'Noto_Sans_CJK_SC',sans-serif]">中</span>
    <svg class="ml-[11px] w-[16px] h-[16px]" viewBox="0 0 16 16" fill="#2c8df2"><path d="M10 0c3 6 0 12-6 12-2 0-3-1-4-2 1 4 4 6 8 6 5 0 8-5 7-9-1-3-3-6-5-7z"/></svg>
    <svg class="ml-[12px] w-[16px] h-[10px]" viewBox="0 0 16 10" fill="none" stroke="#2c8df2" stroke-width="1.200"><circle cx="3" cy="3" r="2"/><path d="M13 0v3c0 2-1 3-2 4" stroke-width="2.200"/></svg>
    <svg class="ml-[12px] w-[16px] h-[16px]" viewBox="0 0 16 16" fill="#2c8df2"><path d="M0 13l8-8c0-3 3-5 6-4l-3 3 1 2 2 1 2-3c1 4-2 7-5 6l-8 7z"/></svg>
    <svg class="ml-[10px] w-[19px] h-[19px]" viewBox="0 0 19 19" fill="none" stroke="#2c8df2" stroke-width="1.800"><circle cx="9.500" cy="9.500" r="8.500"/><circle cx="6.500" cy="8" r=".8"/><circle cx="12.500" cy="8" r=".8"/><path d="M5.500 12c2 2.500 6 2.500 8 0"/></svg>
    <svg class="ml-[9px] w-[18px] h-[17px]" viewBox="0 0 18 17" fill="#2c8df2"><path d="M5 0c1 2 7 2 8 0l5 3-2 5-2-1v10H4V7L2 8 0 3z"/></svg>
    <div class="ml-[10px] w-[17px] h-[17px] grid grid-cols-2 gap-[1px] relative"><span class="bg-[#2c8df2]"></span><span class="bg-[#2c8df2]"></span><span class="bg-[#2c8df2]"></span><span class="bg-[#2c8df2]"></span><span class="absolute -top-[3px] -right-[3px] w-[6px] h-[6px] rounded-full bg-[#f01010]"></span></div>
    <svg class="ml-[9px] w-[10px] h-[14px]" viewBox="0 0 10 14" fill="none" stroke="#2c8df2" stroke-width="1.200"><rect x="1" y="6" width="8" height="7" rx="1"/><path d="M2.500 6V3.500c0-3.500 5-3.500 5 0V6"/></svg>
  </div>
  <div class="absolute left-[1634px] top-[967px] w-[62px] h-[62px] rounded-full border-[3px] border-[#2f8ff0] bg-[#e4e7eb] overflow-hidden">
    <svg class="w-full h-full" viewBox="0 0 56 56"><path d="M8 46V24C8 12 17 7 28 7s20 5 20 17v22z" fill="#bfc2c6"/><circle cx="22" cy="22" r="4" fill="#f0f0f0"/><circle cx="22" cy="22" r="1.800" fill="#555"/><path d="M31 22c2-2 5-2 7 0" stroke="#555" stroke-width="2" fill="none"/><rect x="15" y="29" width="26" height="4" rx="2" fill="#f5f5f5"/><path d="M7 38h42v9H7z" fill="#a6a9ad"/><rect x="16" y="46" width="18" height="10" fill="#f3f3f3"/></svg>
  </div>
  <div class="absolute left-[1792px] top-[953px] w-[162px] h-[34px] bg-white border border-[#b6dafc] rounded-[2px] shadow-[0_0_3px_rgba(80,150,240,.35)] flex items-center text-[15px] leading-none text-[#333] [font-family:'Noto_Sans_CJK_SC',sans-serif]">
    <span class="ml-[14px] -mt-[3px] whitespace-nowrap">工具箱快捷入口</span>
    <svg class="ml-[21px] w-[14px] h-[14px]" viewBox="0 0 14 14" stroke="#a9b4c0" stroke-width="2.400"><path d="M1 1l12 12M13 1L1 13"/></svg>
  </div>
  <svg class="absolute left-[1871px] top-[986px] w-[14px] h-[7px]" viewBox="0 0 14 7"><path d="M0 0l7 7 7-7z" fill="#fff"/><path d="M0 0l7 7 7-7" fill="none" stroke="#b6dafc"/></svg>
</div>

<script>
const R = [
 [0,'-','stop','f','NC_PROGRAM'],
 [1,'','','f0','未用项'],
 [1,'-','warn','f','NC'],
 [2,'-','ok','f','A-1'],
 [3,'-','ok','f','A01'],
 [4,'','ok','opmill','平面区域铣_CO...',1,'2'],
 [4,'','ok','opprof','2D平面轮廓_C...',0,'2'],
 [3,'-','ok','f','A02'],
 [4,'','ok','opcav','3D型腔开粗_C...',1,'8'],
 [3,'-','ok','f','A03'],
 [4,'','ok','opdrill','2D钻孔_COPY',1,'11'],
 [3,'-','ok','f','A04'],
 [4,'','ok','opdrill','2D钻孔_COPY_...',1,'15'],
 [3,'-','ok','f','A05'],
 [4,'','ok','opprof','2D平面轮廓_C...',1,'5'],
 [3,'-','ok','f','A06'],
 [4,'','ok','opprof','2D平面倒角_C...',1,'11'],
 [3,'-','ok','f','A07'],
 [4,'','ok','opmill','平面区域铣_CO...',1,'7'],
 [3,'-','ok','f','A08'],
 [4,'','ok','opcont','3D等高铣削_C...',1,'9'],
 [4,'','ok','opmill','平面区域铣_CO...',0,'9'],
 [3,'-','ok','f','A09'],
 [4,'','ok','opprof','2D平面轮廓_C...',1,'5'],
 [3,'-','ok','f','A10'],
 [4,'','ok','opprof','2D平面轮廓_C...',0,'5'],
 [3,'','ok','f','A11'],[3,'','ok','f','A12'],[3,'','ok','f','A13'],[3,'','ok','f','A14'],[3,'','ok','f','A15'],
 [2,'+','ok','f','A-1_COPY'],[2,'+','ok','f','A-2'],
 [2,'+','warn','f','A-3'],[2,'+','warn','f','A-4'],[2,'+','warn','f','A-5'],[2,'+','warn','f','A-6'],[2,'+','warn','f','A-7'],
 [2,'+','warn','f','A-8'],[2,'+','warn','f','A-9'],[2,'+','warn','f','A-10'],[2,'+','warn','f','A-11'],[2,'+','warn','f','A-12']
];
const cell = 'h-full border-l border-[#ececec]';
let html = '';
R.forEach((r, i) => {
  const [lvl, exp, st, ico, txt, holder, num] = r;
  const isOp = lvl === 4;
  const x = 4 + 19 * lvl;
  const boxCenter = x + 5.5;
  const stub = lvl > 0 ? `<span class="absolute top-[12px] h-0 border-t border-dotted border-[#999]" style="left:${boxCenter - 19}px;width:${exp ? 14 : lvl === 1 ? 14 : 29}px"></span>` : '';
  const expander = exp
    ? `<span class="relative w-[11px] h-[11px] bg-white border border-[#d3d3d3] flex items-center justify-center"><span class="w-[7px] h-px bg-black"></span>${exp === '+' ? '<span class="absolute w-px h-[7px] bg-black"></span>' : ''}</span>`
    : '';
  const status = st === 'ok' ? '<svg class="w-[15px] h-[15px]"><use href="#ok"/></svg>'
    : st === 'warn' ? '<svg class="w-[15px] h-[17px]"><use href="#warn"/></svg>'
    : st === 'stop' ? '<svg class="w-[15px] h-[15px]"><use href="#stop"/></svg>' : '';
  const icon = ico === 'f' || ico === 'f0' ? '<svg class="w-[15px] h-[16px]"><use href="#folder"/></svg>'
    : `<svg class="w-[16px] h-[16px]"><use href="#${ico}"/></svg>`;
  const tree = ico === 'f0'
    ? `<div class="flex items-center h-full" style="padding-left:38px"><span class="w-[19px] shrink-0">${icon}</span><span class="whitespace-nowrap">${txt}</span></div>`
    : `<div class="flex items-center h-full" style="padding-left:${x}px"><span class="w-[16px] shrink-0 flex">${expander}</span><span class="w-[15px] shrink-0 flex justify-center">${status}</span><span class="w-[20px] shrink-0 flex">${icon}</span><span class="whitespace-nowrap ${isOp ? 'text-[15px] text-[#8fb8ae]' : 'text-[15.800px] text-[#1f2a33]'}">${txt}</span></div>`;
  const prog = i >= 33 ? '<span class="pl-[5px] text-[15.800px] text-[#1f2a33]">PROGRAM</span>' : '';
  html += `<div class="h-[24px] border-b border-[#ececec] grid grid-cols-[249px_63px_62px_252px_187px_189px_189px_63px_187px_56px] items-center ${i % 2 ? 'bg-[#f9f9f9]' : 'bg-white'}">
    <div class="relative h-full overflow-hidden">${stub}${tree}</div>
    <div class="h-full border-l border-black flex items-center pl-[8px]">${holder ? '<svg class="w-[8px] h-[16px]"><use href="#holder"/></svg>' : ''}</div>
    <div class="${cell}"></div><div class="${cell}"></div><div class="${cell}"></div><div class="${cell}"></div>
    <div class="${cell} flex items-center">${prog}</div>
    <div class="${cell}"></div><div class="${cell}"></div>
    <div class="${cell} flex items-center pl-[5px] text-[15.800px] text-[#8fb8ae]">${num || ''}</div>
  </div>`;
});
// vertical dotted guides of the tree: one per parent, from its row to its last child
const guides = [];
R.forEach((r, i) => {
  if (r[1] !== '-') return;
  let last = i;
  for (let j = i + 1; j < R.length && R[j][0] > r[0]; j++) if (R[j][0] === r[0] + 1) last = j;
  if (last === i) return;
  guides.push([4 + 19 * r[0] + 5, i, last]);
});
guides.forEach(([x, a, b]) => {
  const bottom = b >= 42 ? 1032 : b * 24 + 12;
  html += `<span class="absolute w-0 border-l border-dotted border-[#999]" style="left:${x}px;top:${a * 24 + 18}px;height:${bottom - a * 24 - 18}px"></span>`;
});
document.getElementById('rows').innerHTML = html;
</script>
</body>
</html>
